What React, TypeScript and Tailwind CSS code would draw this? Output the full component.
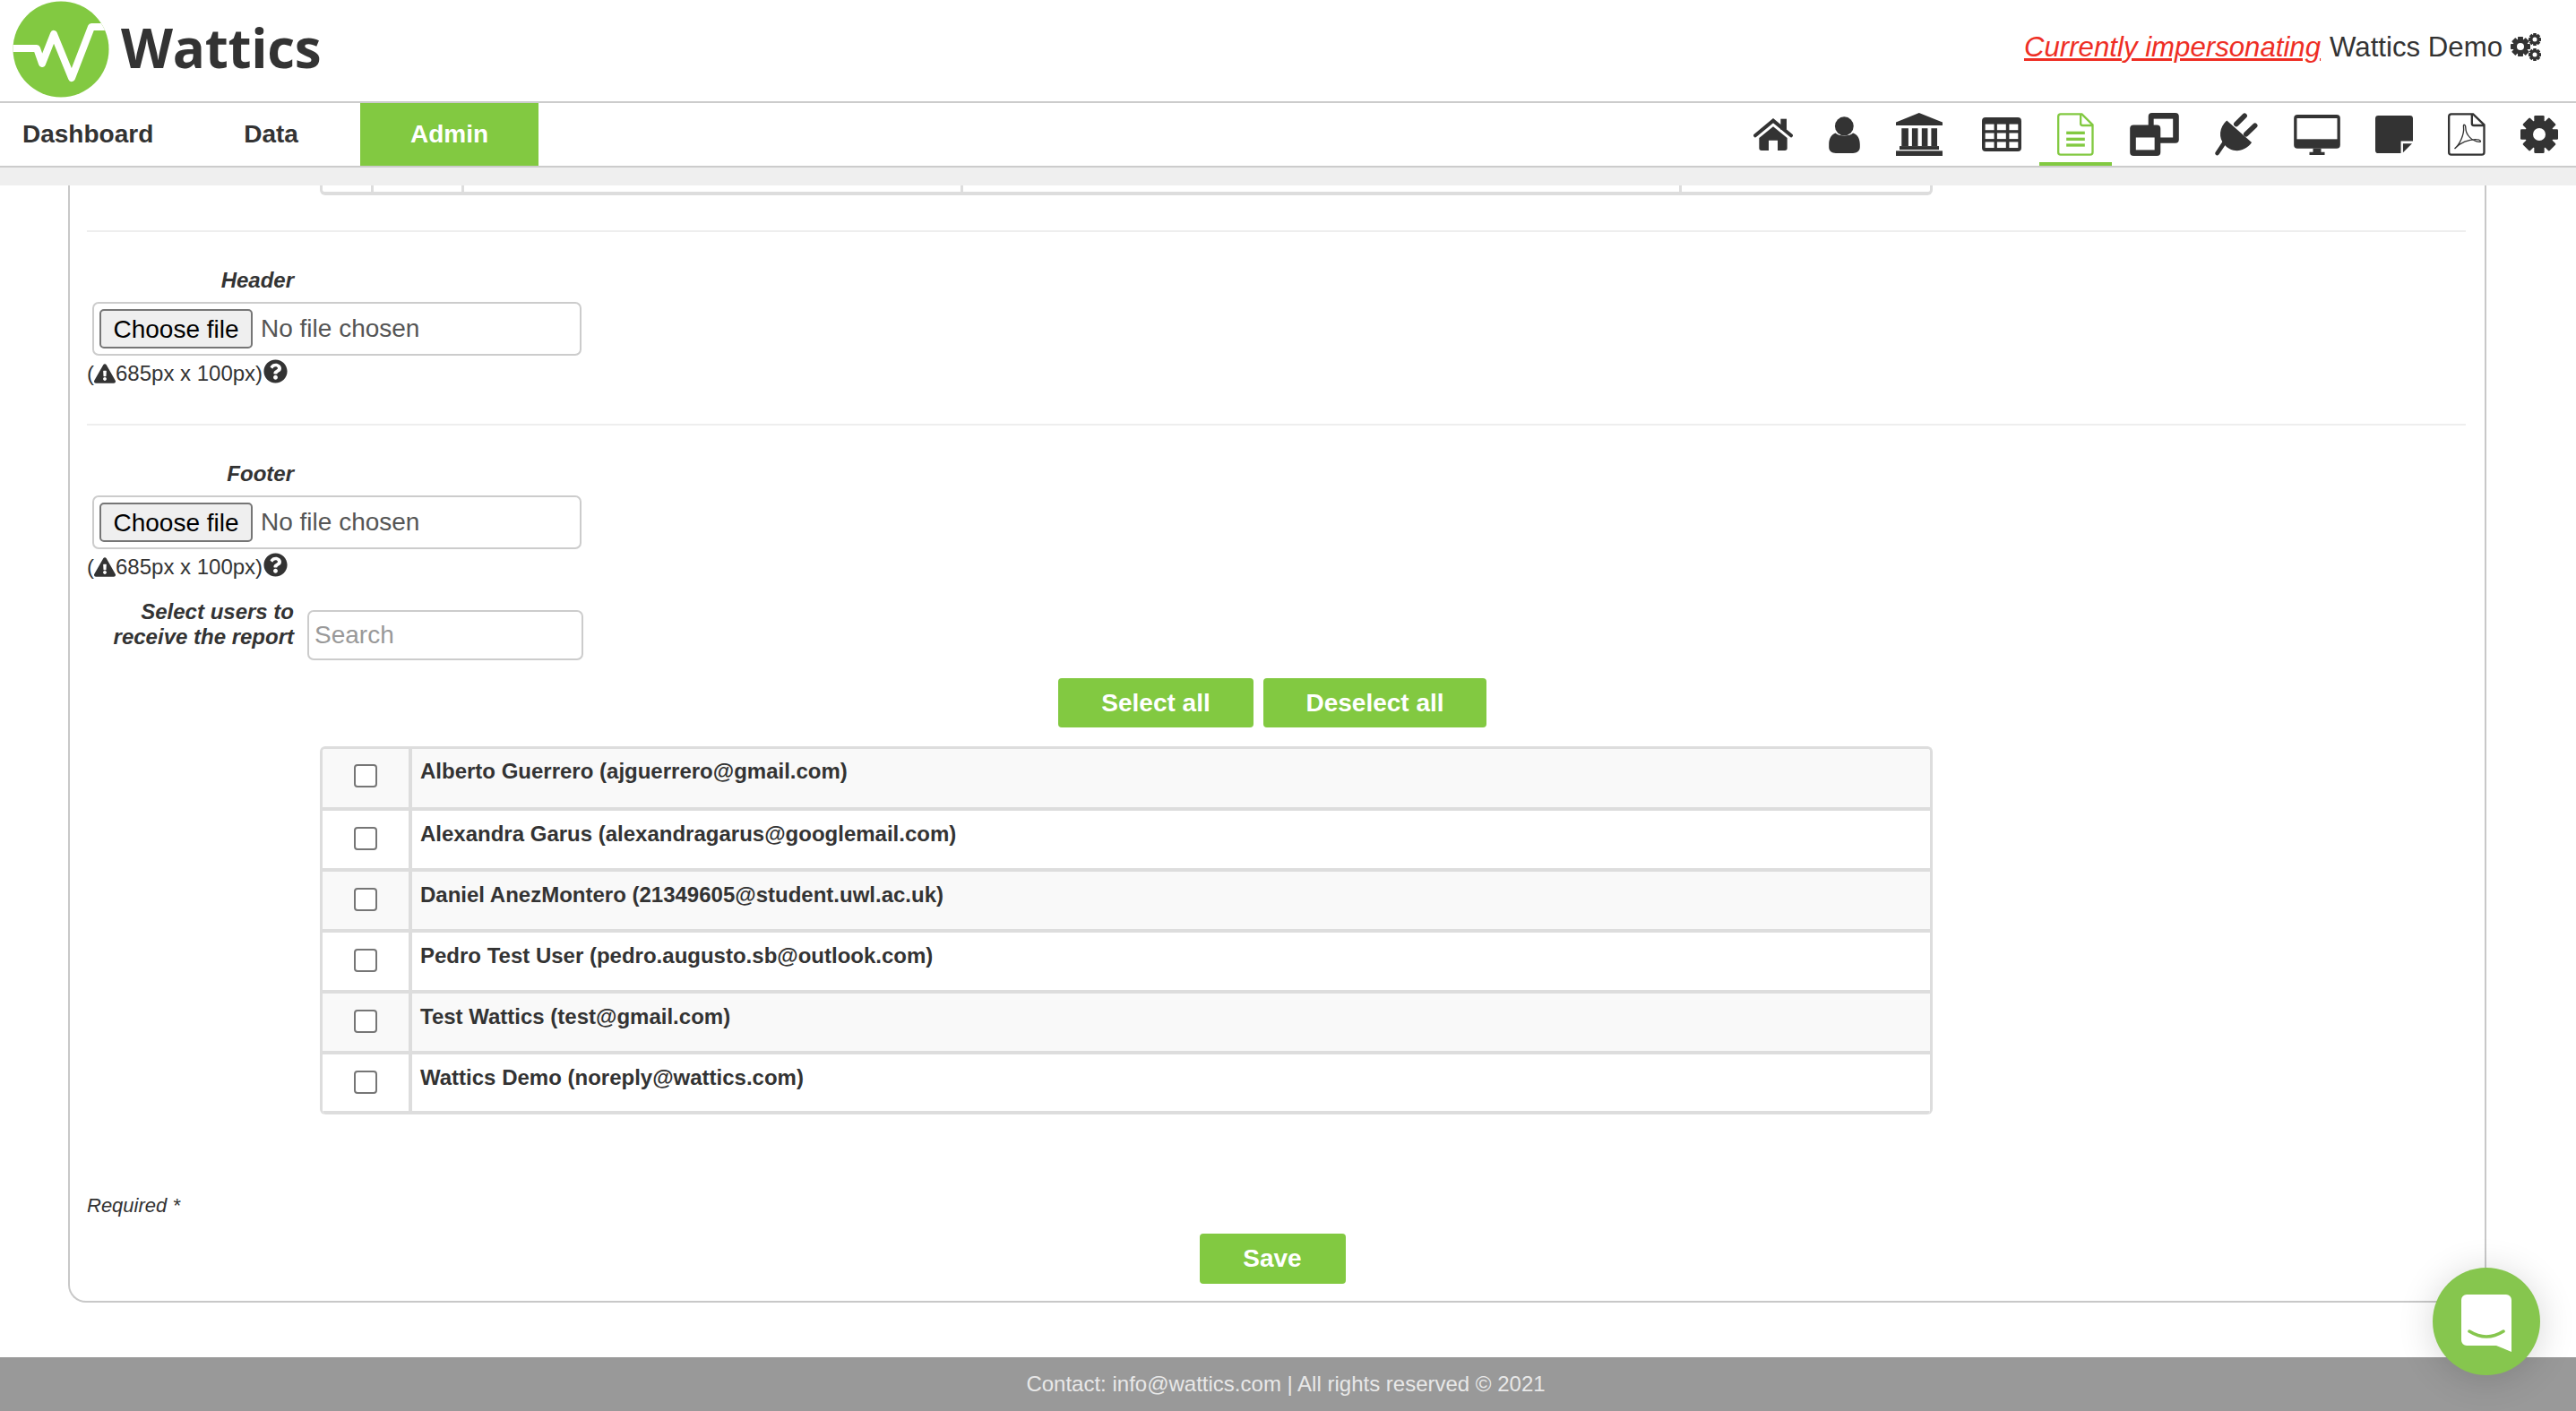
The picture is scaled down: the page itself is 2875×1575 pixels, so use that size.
import React from 'react';
import { FaExclamationTriangle, FaQuestionCircle } from 'react-icons/fa';

const USERS = [
  'Alberto Guerrero (ajguerrero@gmail.com)',
  'Alexandra Garus (alexandragarus@googlemail.com)',
  'Daniel AnezMontero (21349605@student.uwl.ac.uk)',
  'Pedro Test User (pedro.augusto.sb@outlook.com)',
  'Test Wattics (test@gmail.com)',
  'Wattics Demo (noreply@wattics.com)',
];

const DARK = '#333333';

// Gear drawn around a point, used for the cog and the cogs icon
const Gear = ({ cx, cy, r, hole }: { cx: number; cy: number; r: number; hole: number }) => (
  <g>
    {[0, 45, 90, 135].map((a) => (
      <rect
        key={a}
        x={cx - r * 0.27}
        y={cy - r}
        width={r * 0.54}
        height={r * 2}
        rx={r * 0.06}
        fill={DARK}
        transform={`rotate(${a} ${cx} ${cy})`}
      />
    ))}
    <circle cx={cx} cy={cy} r={r * 0.76} fill={DARK} />
    <circle cx={cx} cy={cy} r={hole} fill="white" />
  </g>
);

const Logo = () => (
  <svg width="108" height="108" viewBox="0 0 108 108" className="mt-[-4px] shrink-0">
    <defs>
      <clipPath id="logo-circle">
        <circle cx="54" cy="54" r="53.5" />
      </clipPath>
    </defs>
    <circle cx="54" cy="54" r="53.5" fill="#82c941" />
    <path
      d="M-2 53 H27 L33 70 L46 37 L66 86 L88 29 H112"
      fill="none"
      stroke="white"
      strokeWidth="8"
      strokeLinejoin="round"
      clipPath="url(#logo-circle)"
    />
  </svg>
);

const HomeIcon = () => (
  <svg width="44" height="36" viewBox="0 0 130 108" fill={DARK}>
    <rect x="90" y="2" width="20" height="36" />
    <path d="M5 58 L65 8 L125 58" fill="none" stroke={DARK} strokeWidth="12" strokeLinecap="round" />
    <path d="M18 66 L65 28 L112 66 V100 a8 8 0 0 1 -8 8 H80 V74 H50 V108 H26 a8 8 0 0 1 -8 -8 Z" />
  </svg>
);

const UserIcon = () => (
  <svg width="35" height="42" viewBox="0 0 103 125" fill={DARK}>
    <circle cx="51" cy="35" r="31" />
    <path d="M22 58 C32 70 70 70 80 58 C95 62 103 78 103 95 V105 C103 118 92 125 80 125 H23 C10 125 0 118 0 105 V95 C0 78 8 62 22 58 Z" />
  </svg>
);

const BankIcon = () => (
  <svg width="52" height="48" viewBox="0 0 157 145" fill={DARK}>
    <path d="M78 0 L157 32 V42 H0 V32 Z" />
    <rect x="19" y="52" width="23" height="60" />
    <rect x="54" y="52" width="20" height="60" />
    <rect x="87" y="52" width="20" height="60" />
    <rect x="119" y="52" width="20" height="60" />
    <rect x="12" y="112" width="133" height="12" />
    <rect x="0" y="128" width="157" height="17" />
  </svg>
);

const TableIcon = () => (
  <svg width="44" height="38" viewBox="0 0 133 115" className="ml-1">
    <rect width="133" height="115" rx="12" fill={DARK} />
    {[11, 51, 92].map((x) =>
      [23, 53, 83].map((y) => <rect key={`${x}-${y}`} x={x} y={y} width="30" height="20" fill="white" />),
    )}
  </svg>
);

const FileIcon = () => (
  <svg width="41" height="48" viewBox="0 0 122 144" fill="none" stroke="#82c941" strokeWidth="7">
    <path d="M11 4 H82 L118 40 V132 a8 8 0 0 1 -8 8 H11 a8 8 0 0 1 -8 -8 V12 a8 8 0 0 1 8 -8 Z" />
    <path d="M78 4 V36 a6 6 0 0 0 6 6 H118" />
    <rect x="30" y="62" width="62" height="10" fill="#82c941" stroke="none" />
    <rect x="30" y="83" width="62" height="10" fill="#82c941" stroke="none" />
    <rect x="30" y="103" width="62" height="10" fill="#82c941" stroke="none" />
  </svg>
);

const CopyIcon = () => (
  <svg width="55" height="48" viewBox="0 0 165 145">
    <rect x="62" y="0" width="103" height="102" rx="12" fill={DARK} />
    <rect x="80" y="20" width="65" height="63" fill="white" />
    <rect x="0" y="41" width="103" height="104" rx="12" fill={DARK} />
    <rect x="20" y="83" width="63" height="42" fill="white" />
  </svg>
);

const PlugIcon = () => (
  <svg width="48" height="48" viewBox="0 0 145 145" fill={DARK}>
    <path d="M40 26 L124 100 C100 135 55 135 33 108 C10 85 15 48 40 26 Z" />
    <path d="M100 10 L72 38 M135 43 L105 72" stroke={DARK} strokeWidth="17" strokeLinecap="round" />
    <path d="M32 100 L8 136" stroke={DARK} strokeWidth="14" strokeLinecap="round" />
  </svg>
);

const DesktopIcon = () => (
  <svg width="52" height="45" viewBox="0 0 155 135" fill={DARK}>
    <rect width="155" height="113" rx="12" />
    <rect x="10" y="12" width="135" height="70" fill="white" />
    <path d="M64 113 H91 V125 H103 V135 H52 V125 H64 Z" />
  </svg>
);

const StickyIcon = () => (
  <svg width="42" height="42" viewBox="0 0 125 125" fill={DARK}>
    <path d="M10 0 H115 a10 10 0 0 1 10 10 V85 H85 V125 H10 a10 10 0 0 1 -10 -10 V10 a10 10 0 0 1 10 -10 Z" />
    <path d="M92 93 H122 L92 123 Z" />
  </svg>
);

const PdfIcon = () => (
  <svg width="42" height="48" viewBox="0 0 125 144" fill="none" stroke={DARK} strokeWidth="7">
    <path d="M11 4 H84 L121 40 V132 a8 8 0 0 1 -8 8 H11 a8 8 0 0 1 -8 -8 V12 a8 8 0 0 1 8 -8 Z" />
    <path d="M80 4 V36 a6 6 0 0 0 6 6 H121" />
    <path
      d="M22 120 C40 105 55 72 52 47 C50 36 59 38 59 50 C60 75 80 95 105 97 C112 98 110 89 95 89 C70 88 40 100 22 120 Z"
      strokeWidth="4"
    />
  </svg>
);

const CogIcon = () => (
  <svg width="42" height="42" viewBox="0 0 42 42">
    <Gear cx={21} cy={21} r={21} hole={7} />
  </svg>
);

const CogsIcon = () => (
  <svg width="34" height="31" viewBox="0 0 34 31" className="shrink-0">
    <Gear cx={11} cy={15} r={11} hole={4} />
    <Gear cx={27} cy={7} r={7} hole={2.5} />
    <Gear cx={27} cy={24} r={7} hole={2.5} />
  </svg>
);

const NAV_ICONS = [
  { id: 'home', icon: <HomeIcon />, cls: '' },
  { id: 'user', icon: <UserIcon />, cls: '' },
  { id: 'bank', icon: <BankIcon />, cls: '' },
  { id: 'table', icon: <TableIcon />, cls: '' },
  { id: 'report', icon: <FileIcon />, cls: '', active: true },
  { id: 'copy', icon: <CopyIcon />, cls: '' },
  { id: 'plug', icon: <PlugIcon />, cls: '' },
  { id: 'desktop', icon: <DesktopIcon />, cls: '-mr-px' },
  { id: 'sticky', icon: <StickyIcon />, cls: '-mr-px' },
  { id: 'pdf', icon: <PdfIcon />, cls: '-mr-px' },
  { id: 'cog', icon: <CogIcon />, cls: '' },
];

const FileField = ({ label }: { label: string }) => (
  <div>
    <div className="w-[231px] text-right text-[24px] leading-[28px] font-bold italic text-[#333]">{label}</div>
    <div className="mt-[10px] ml-[6px] flex h-[60px] w-[546px] items-center rounded-[7px] border-2 border-[#ccc] pl-[6px] text-[28px] text-[#555]">
      <button className="h-[44px] w-[171px] rounded-[5px] border-2 border-[#767676] bg-[#efefef] text-black">
        Choose file
      </button>
      <span className="ml-[9px]">No file chosen</span>
    </div>
    <div className="mt-[6px] flex h-[28px] items-center text-[24px] leading-[28px] text-[#333]">
      <span>(</span>
      <FaExclamationTriangle className="h-[22px] w-[24px]" />
      <span>685px x 100px)</span>
      <FaQuestionCircle className="mb-[6px] ml-[1px] h-[27px] w-[27px]" />
    </div>
  </div>
);

export default function App() {
  return (
    <div className="relative flex h-screen flex-col overflow-hidden bg-white font-['Liberation_Sans',Arial,sans-serif] text-[#333]">
      {/* Top bar */}
      <header className="flex h-[113px] shrink-0 items-center justify-between pl-[14px] pr-[39px]">
        <div className="flex items-center">
          <Logo />
          <span className="ml-[13px] mt-[-7px] font-['Open_Sans',sans-serif] text-[60px] leading-none font-bold tracking-[-0.3px] text-[#333]">
            Wattics
          </span>
        </div>
        <div className="mt-[-7px] flex items-center text-[31.2px]">
          <span className="italic text-[#ee2e24] underline">Currently impersonating</span>
          <span className="ml-[10px]">Wattics Demo</span>
          <span className="ml-[9px]">
            <CogsIcon />
          </span>
        </div>
      </header>

      {/* Nav */}
      <nav className="flex h-[74px] shrink-0 items-stretch justify-between border-y-2 border-[#ccc]">
        <div className="flex text-[28px] font-bold">
          <a className="flex items-center pl-[25px] pr-[44px]">Dashboard</a>
          <a className="flex items-center px-[57px]">Data</a>
          <a className="ml-[12px] flex items-center bg-[#82c941] px-[56px] text-white">Admin</a>
        </div>
        <div className="flex">
          {NAV_ICONS.map((item) => (
            <div key={item.id} className={`relative flex items-center px-[20px] ${item.cls}`}>
              {item.icon}
              {item.active && <div className="absolute inset-x-0 bottom-0 h-[4px] bg-[#82c941]" />}
            </div>
          ))}
        </div>
      </nav>
      <div className="h-[20px] shrink-0 bg-[#efefef]" />

      {/* Page content */}
      <main className="flex-1">
        <div className="ml-[76px] w-[2699px] rounded-b-[20px] border-x-2 border-b-2 border-[#c8c8c8] pb-[19px] pl-[19px] pr-[21px]">
          <div className="ml-[260px] flex h-[11px] w-[1800px] rounded-b-[6px] border-x-[3px] border-b-[4px] border-[#ddd]">
            <div className="w-[57px] border-r-[3px] border-[#ddd]" />
            <div className="w-[101px] border-r-[3px] border-[#ddd]" />
            <div className="w-[557px] border-r-[3px] border-[#ddd]" />
            <div className="w-[802px] border-r-[3px] border-[#ddd]" />
          </div>

          <div className="mt-[39px] mb-[40px] h-[2px] bg-[#eee]" />
          <FileField label="Header" />
          <div className="mt-[42px] mb-[40px] h-[2px] bg-[#eee]" />
          <FileField label="Footer" />

          <div className="mt-[22px] flex">
            <div className="w-[231px] text-right text-[24px] leading-[28px] font-bold italic">
              Select users to
              <br />
              receive the report
            </div>
            <input
              placeholder="Search"
              className="mt-[12px] ml-[15px] h-[56px] w-[308px] rounded-[7px] border-2 border-[#ccc] pb-[-1px] pl-[6px] text-[28px] outline-none placeholder:text-[#999]"
            />
          </div>

          <div className="mt-[20px] flex justify-center gap-[11px] pr-[9px]">
            <button className="h-[55px] w-[218px] rounded-[4px] bg-[#82c941] text-[28px] font-bold text-white">
              Select all
            </button>
            <button className="h-[55px] w-[249px] rounded-[4px] bg-[#82c941] text-[28px] font-bold text-white">
              Deselect all
            </button>
          </div>

          {/* Users table */}
          <div className="mt-[21px] ml-[260px] w-[1800px] overflow-hidden rounded-[6px] border-x-[3px] border-t-[3px] border-[#ddd]">
            {USERS.map((user, i) => (
              <div
                key={user}
                className={`flex border-b-[4px] border-[#ddd] ${i === 0 ? 'h-[69px]' : i === 5 ? 'h-[67px]' : 'h-[68px]'} ${i % 2 === 0 ? 'bg-[#f9f9f9]' : 'bg-white'}`}
              >
                <div
                  className={`flex w-[100px] justify-center border-r-[4px] border-[#ddd] ${i === 0 ? 'pt-[17px]' : 'pt-[18px]'}`}
                >
                  <input
                    type="checkbox"
                    className="h-[26px] w-[26px] appearance-none rounded-[4px] border-2 border-[#767676] bg-white"
                  />
                </div>
                <div className={`pl-[9px] text-[24px] leading-[28px] font-bold ${i === 0 ? 'pt-[11px]' : 'pt-[12px]'}`}>
                  {user}
                </div>
              </div>
            ))}
          </div>

          <div className="mt-[89px] text-[22px] leading-[26px] italic">Required *</div>
          <div className="mt-[18px] flex justify-center pr-[9px]">
            <button className="h-[56px] w-[163px] rounded-[4px] bg-[#82c941] text-[28px] font-bold text-white">
              Save
            </button>
          </div>
        </div>
      </main>

      <footer className="flex h-[60px] shrink-0 items-center justify-center bg-[#999] pr-[5px] text-[24px] text-[#e8e8e8]">
        Contact: info@wattics.com | All rights reserved © 2021
      </footer>

      {/* Chat launcher */}
      <button className="absolute right-[40px] bottom-[40px] flex h-[120px] w-[120px] items-center justify-center rounded-full bg-[#86c64e] shadow-[0_4px_40px_rgba(0,0,0,0.16)]">
        <svg width="56" height="64" viewBox="0 0 56 64" className="mt-[4px]">
          <path d="M6 0 H50 a6 6 0 0 1 6 6 V64 L39 57 H6 a6 6 0 0 1 -6 -6 V6 a6 6 0 0 1 6 -6 Z" fill="white" />
          <path d="M9 41 Q28 53 47 41" fill="none" stroke="#86c64e" strokeWidth="3.5" strokeLinecap="round" />
        </svg>
      </button>
    </div>
  );
}
